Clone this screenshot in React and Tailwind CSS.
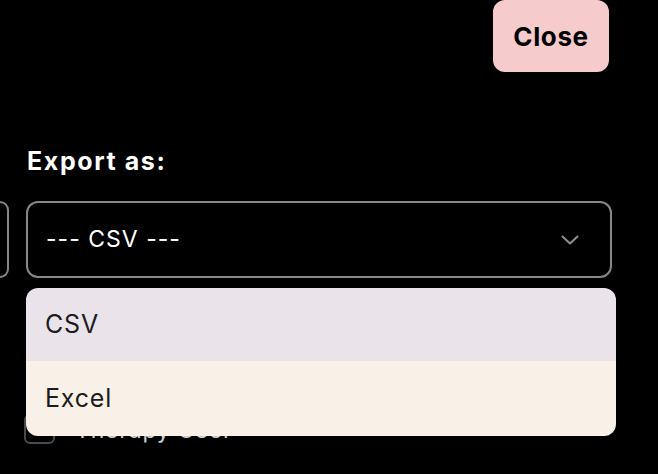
import React, { useState } from "react";

const options = [
	{ id: 1, name: "CSV", value: "csv" },
	{ id: 2, name: "Excel", value: "excel" },
];

const Chevron = () => (
	<svg width="18" height="10" viewBox="0 0 18 10" fill="none">
		<path
			d="M1.5 1.5 L9 8.5 L16.5 1.5"
			stroke="#8e8e93"
			strokeWidth="2"
			strokeLinecap="round"
			strokeLinejoin="round"
		/>
	</svg>
);

const App = () => {
	const [selected, setSelected] = useState(options[0]);

	return (
		<div
			className="relative w-[658px] h-[474px] overflow-hidden bg-black text-white"
			style={{ fontFamily: "Inter, 'Noto Sans', sans-serif" }}
		>
			<div className="flex justify-end pr-[49px]">
				<button className="w-[116px] h-[72px] rounded-[12px] bg-[#f6cbcb] text-black text-[26px] font-bold tracking-[0.6px]">
					Close
				</button>
			</div>

			<p className="mt-[74px] ml-[27px] text-[25px] font-bold leading-[30px] tracking-[1.6px]">
				Export as:
			</p>

			<div className="mt-[25px] flex gap-[17px]">
				<div className="w-[9px] h-[77px] border-y-2 border-r-2 border-[#86868c] rounded-r-[12px]" />
				<div className="w-[586px] h-[77px] flex items-center justify-between pl-[18px] pr-[31px] border-2 border-[#86868c] rounded-[12px]">
					<span className="text-[23px] tracking-[1px]">--- {selected.name} ---</span>
					<Chevron />
				</div>
			</div>

			<div className="mt-[133px] ml-[24px] flex items-center gap-[20px]">
				<div className="w-[31px] h-[30px] border-2 border-[#4a4a4e] rounded-[6px]" />
				<span className="pt-[2px] text-[23px] tracking-[0.8px] text-[#d0d0d4]">Therapy User</span>
			</div>

			<div className="absolute left-[26px] top-[288px] w-[590px] rounded-[12px] overflow-hidden">
				{options.map((opt, i) => (
					<div
						key={opt.id}
						onClick={() => setSelected(opt)}
						className={
							i === 0
								? "h-[73px] flex items-center pl-[19px] bg-[#eae4ea] text-[#1c1c1e] text-[25px] tracking-[0.8px]"
								: "h-[75px] flex items-center pl-[19px] bg-[#f9f1e8] text-[#1c1c1e] text-[25px] tracking-[0.8px]"
						}
					>
						{opt.name}
					</div>
				))}
			</div>
		</div>
	);
};

export default App;
